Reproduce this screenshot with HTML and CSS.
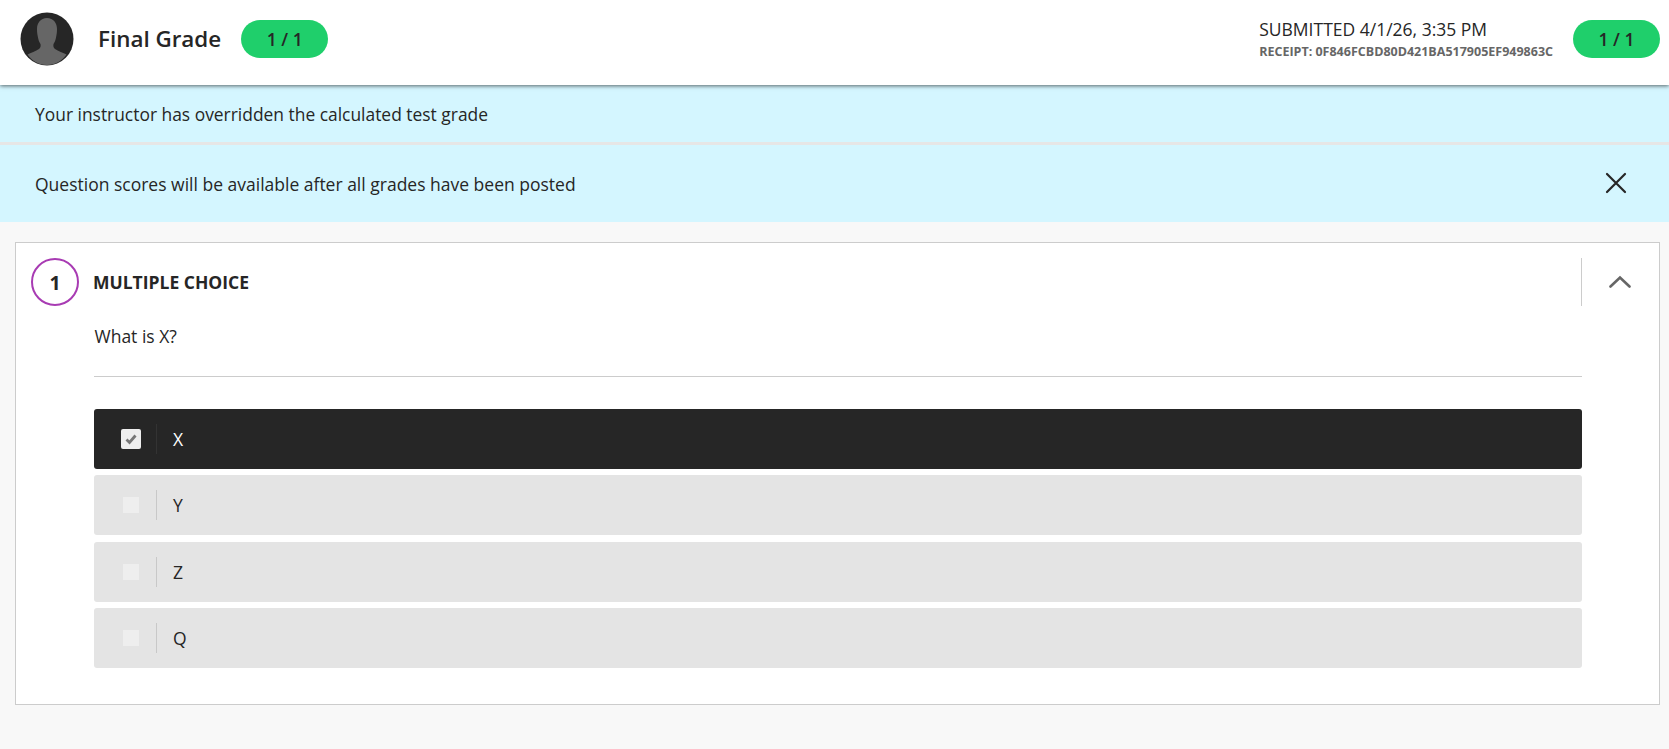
FILE: index.html
```html
<!DOCTYPE html>
<html lang="en">
<head>
<meta charset="utf-8">
<title>Final Grade</title>
<link rel="stylesheet" href="styles.css">
</head>
<body>
<header class="top">
  <div class="avatar">
    <svg viewBox="0 0 54 54" width="54" height="54" aria-hidden="true">
      <circle cx="27" cy="27" r="26.500" fill="#262626"/>
      <path class="bust" d="M27 6c6.500 0 10 5 10 11 0 3-.3 5-.7 7-.5 3-1.300 6-2.800 8-.4 2 0 4 1.500 5 3 2 8.500 4 11.500 5.500-4.500 6-10.500 10.500-19.500 10.500s-15-4.500-19.500-10.500c3-1.500 8.500-3.500 11.500-5.500 1.500-1 1.900-3 1.500-5-1.500-2-2.300-5-2.800-8-.4-2-.7-4-.7-7C17 11 20.500 6 27 6z"/>
    </svg>
  </div>
  <h1 class="title">Final Grade</h1>
  <span class="pill">1 / 1</span>
  <div class="meta">
    <div class="submitted">SUBMITTED 4/1/26, 3:35 PM</div>
    <div class="receipt">RECEIPT: 0F846FCBD80D421BA517905EF949863C</div>
  </div>
  <span class="pill">1 / 1</span>
</header>
<div class="notice notice-first">Your instructor has overridden the calculated test grade</div>
<div class="notice notice-second">
  <span>Question scores will be available after all grades have been posted</span>
  <svg class="close" viewBox="0 0 22 22" width="22" height="22" aria-hidden="true">
    <path d="M2 2l18 18M20 2L2 20"/>
  </svg>
</div>
<main class="page">
  <section class="card">
    <div class="q-head">
      <div class="q-num">1</div>
      <h2 class="q-type">MULTIPLE CHOICE</h2>
      <div class="q-toggle">
        <svg viewBox="0 0 22 14" width="22" height="14" aria-hidden="true">
          <path d="M1.500 11.500L11 2.500l9.500 9"/>
        </svg>
      </div>
    </div>
    <div class="q-body">
      <p class="q-text">What is X?</p>
      <div class="options">
        <div class="option selected">
          <span class="box">
            <svg viewBox="0 0 12 12" width="12" height="12" aria-hidden="true"><path d="M1.500 6.500l3 3L10.500 2.500"/></svg>
          </span>
          <span class="label">X</span>
        </div>
        <div class="option"><span class="box"></span><span class="label">Y</span></div>
        <div class="option"><span class="box"></span><span class="label">Z</span></div>
        <div class="option"><span class="box"></span><span class="label">Q</span></div>
      </div>
    </div>
  </section>
</main>
</body>
</html>
```
FILE: styles.css
```css
* { box-sizing: border-box; }
html, body { height: 100%; }
body {
  margin: 0;
  background: #f8f8f8;
  color: #262626;
  font-family: "Open Sans", "Liberation Sans", sans-serif;
  overflow: hidden;
}
.top {
  position: relative;
  z-index: 1;
  height: 85px;
  display: flex;
  align-items: center;
  padding: 0 9px 8px 20px;
  background: #fff;
  box-shadow: 0 1px 4px rgba(0, 0, 0, .6);
}
.avatar { width: 54px; height: 54px; margin-top: 1px; flex: none; }
.avatar svg { display: block; }
.bust { fill: #666; }
.title {
  margin: 0 0 0 24px;
  font-size: 22.400px;
  font-weight: 600;
  line-height: 30px;
}
.pill {
  width: 87px;
  height: 38px;
  margin-left: 20px;
  border-radius: 19px;
  background: #1fcf6b;
  font-size: 17.500px;
  font-weight: 600;
  line-height: 38px;
  text-align: center;
  flex: none;
}
.meta { margin-left: auto; }
.submitted { font-size: 17.500px; line-height: 24px; }
.receipt {
  margin-top: 3px;
  font-size: 12.500px;
  font-weight: 700;
  line-height: 16px;
  color: #666;
}
.notice {
  display: flex;
  align-items: center;
  justify-content: space-between;
  background: #d4f6ff;
  font-size: 17.500px;
  padding: 0 42px 0 35px;
}
.notice-first { height: 57px; padding-top: 1px; font-size: 17.420px; }
.notice-second { height: 80px; border-top: 3px solid #e6e6e6; }
.close { fill: none; stroke: #262626; stroke-width: 2.200; stroke-linecap: round; flex: none; margin-top: -1px; }
.page { padding: 20px 9px 0 15px; }
.card {
  height: 463px;
  background: #fff;
  border: 1px solid #ccc;
  padding: 15px 0 0 15px;
}
.q-head { display: flex; align-items: center; height: 48px; }
.q-num {
  width: 48px;
  height: 48px;
  border: 2px solid #a83bb3;
  border-radius: 50%;
  display: flex;
  align-items: center;
  justify-content: center;
  font-size: 19.500px;
  font-weight: 700;
  flex: none;
}
.q-type {
  margin: 0 0 0 14px;
  font-size: 17.500px;
  font-weight: 700;
  line-height: 24px;
  flex: 1;
}
.q-toggle {
  width: 78px;
  height: 48px;
  border-left: 1px solid #ccc;
  display: flex;
  align-items: center;
  justify-content: center;
  flex: none;
}
.q-toggle svg { fill: none; stroke: #666; stroke-width: 2.600; stroke-linecap: round; margin-left: -2px; }
.q-body { margin: 0 77px 0 63px; }
.q-text {
  margin: 0;
  padding: 18px 0 0 0.5px;
  font-size: 17.500px;
  line-height: 24px;
  border-bottom: 1px solid #ccc;
  height: 71px;
}
.options { display: flex; flex-direction: column; gap: 6.400px; margin-top: 32px; }
.option {
  height: 60px;
  display: flex;
  align-items: center;
  background: #e4e4e4;
  border-radius: 3px;
  font-size: 17.500px;
}
.option.selected { background: #262626; color: #fff; }
.box {
  width: 16px;
  height: 16px;
  margin-left: 29px;
  background: #eee;
  display: flex;
  align-items: center;
  justify-content: center;
  flex: none;
}
.selected .box {
  width: 20px;
  height: 20px;
  margin-left: 27px;
  border-radius: 2px;
}
.box svg { fill: none; stroke: #777; stroke-width: 2.800; }
.label {
  height: 30px;
  margin-left: 17px;
  padding-left: 16px;
  border-left: 1px solid #c8c8c8;
  line-height: 30px;
}
.selected .label { margin-left: 15px; border-left-color: #333; }
```
